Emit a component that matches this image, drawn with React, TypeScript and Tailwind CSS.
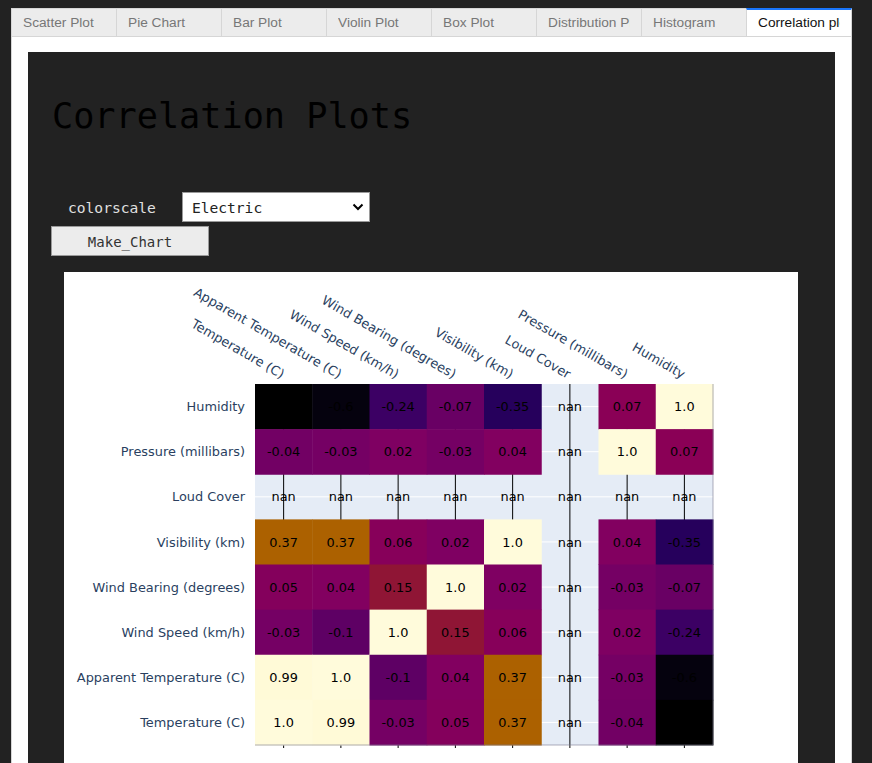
import React from "react";

const tabs = [
  "Scatter Plot",
  "Pie Chart",
  "Bar Plot",
  "Violin Plot",
  "Box Plot",
  "Distribution Plot",
  "Histogram",
  "Correlation plots",
];

const rows = [
  "Humidity",
  "Pressure (millibars)",
  "Loud Cover",
  "Visibility (km)",
  "Wind Bearing (degrees)",
  "Wind Speed (km/h)",
  "Apparent Temperature (C)",
  "Temperature (C)",
];

const cols = [
  "Temperature (C)",
  "Apparent Temperature (C)",
  "Wind Speed (km/h)",
  "Wind Bearing (degrees)",
  "Visibility (km)",
  "Loud Cover",
  "Pressure (millibars)",
  "Humidity",
];

const z: (string | null)[][] = [
  ["-0.63", "-0.6", "-0.24", "-0.07", "-0.35", null, "0.07", "1.0"],
  ["-0.04", "-0.03", "0.02", "-0.03", "0.04", null, "1.0", "0.07"],
  [null, null, null, null, null, null, null, null],
  ["0.37", "0.37", "0.06", "0.02", "1.0", null, "0.04", "-0.35"],
  ["0.05", "0.04", "0.15", "1.0", "0.02", null, "-0.03", "-0.07"],
  ["-0.03", "-0.1", "1.0", "0.15", "0.06", null, "0.02", "-0.24"],
  ["0.99", "1.0", "-0.1", "0.04", "0.37", null, "-0.03", "-0.6"],
  ["1.0", "0.99", "-0.03", "0.05", "0.37", null, "-0.04", "-0.63"],
];

const colorOf: Record<string, string> = {
  "-0.63": "#000000",
  "-0.6": "#05020e",
  "-0.35": "#26005c",
  "-0.24": "#3c0064",
  "-0.1": "#5e0064",
  "-0.07": "#690064",
  "-0.04": "#720064",
  "-0.03": "#750064",
  "0.02": "#7f0062",
  "0.04": "#820060",
  "0.05": "#84005c",
  "0.06": "#87005a",
  "0.07": "#8a0056",
  "0.15": "#8f1535",
  "0.37": "#ac6100",
  "0.99": "#fffad7",
  "1.0": "#fffbdb",
};

const X0 = 191;
const Y0 = 112;
const CW = 57.25;
const RH = 45.125;
const X1 = X0 + CW * 8;
const Y1 = Y0 + RH * 8;
const FONT = "'DejaVu Sans', Verdana, sans-serif";
const FS = 12.9;

function Heatmap() {
  return (
    <svg width={734} height={520} className="block">
      <rect x={X0} y={Y0} width={X1 - X0} height={Y1 - Y0} fill="#e5ecf6" />
      {rows.map((_, r) => (
        <line
          key={"h" + r}
          x1={X0}
          x2={X1}
          y1={Y0 + RH * r + RH / 2}
          y2={Y0 + RH * r + RH / 2}
          stroke="#ffffff"
          strokeWidth={1}
        />
      ))}
      {cols.map((_, c) => (
        <line
          key={"v" + c}
          x1={X0 + CW * c + CW / 2}
          x2={X0 + CW * c + CW / 2}
          y1={Y0}
          y2={Y1 + 3}
          stroke="#000000"
          strokeWidth={1}
        />
      ))}
      {z.map((row, r) =>
        row.map((v, c) =>
          v === null ? null : (
            <rect
              key={"c" + r + "-" + c}
              x={X0 + CW * c}
              y={Y0 + RH * r}
              width={CW + 0.5}
              height={RH + 0.5}
              fill={colorOf[v]}
            />
          )
        )
      )}
      <line x1={X1} x2={X1} y1={Y0} y2={Y1} stroke="#7a7a90" strokeWidth={1} opacity={0.6} />
      <line x1={X0} x2={X1} y1={Y1} y2={Y1} stroke="#7a7a90" strokeWidth={1} opacity={0.6} />
      {z.map((row, r) =>
        row.map((v, c) => (
          <text
            key={"t" + r + "-" + c}
            x={X0 + CW * c + CW / 2}
            y={Y0 + RH * r + RH / 2}
            dy="0.36em"
            textAnchor="middle"
            fontFamily={FONT}
            fontSize={FS}
            fill="#000000"
          >
            {v === null ? "nan" : v}
          </text>
        ))
      )}
      {rows.map((name, r) => (
        <text
          key={"rl" + r}
          x={X0 - 10}
          y={Y0 + RH * r + RH / 2}
          dy="0.36em"
          textAnchor="end"
          fontFamily={FONT}
          fontSize={FS}
          fill="#2a3f5f"
        >
          {name}
        </text>
      ))}
      {cols.map((name, c) => {
        const ax = X0 + CW * c + CW / 2 - 2.5;
        const ay = Y0 - 5;
        return (
          <text
            key={"cl" + c}
            x={ax}
            y={ay}
            textAnchor="end"
            transform={`rotate(30 ${ax} ${ay})`}
            fontFamily={FONT}
            fontSize={FS}
            fill="#2a3f5f"
          >
            {name}
          </text>
        );
      })}
    </svg>
  );
}

export default function App() {
  return (
    <div className="h-[763px] w-[872px] overflow-hidden bg-[#222222] pt-[8px] pl-[11px]">
      <div className="w-[841px]">
        <div className="flex h-[29px]">
          {tabs.map((t, i) => {
            const active = i === tabs.length - 1;
            return (
              <div
                key={t}
                className={
                  active
                    ? "flex h-[29px] w-[106px] items-center border-x border-b border-t-2 border-x-[#d6d6d6] border-b-[#d6d6d6] border-t-[#1975fa] bg-white px-[11px] text-[#111111]"
                    : "flex h-[29px] w-[105px] items-center border-l border-y border-[#d6d6d6] bg-[#ececec] px-[11px] text-[#777777]"
                }
                style={{ fontFamily: "'Liberation Sans', Arial, sans-serif" }}
              >
                <span className="block w-full overflow-hidden whitespace-nowrap text-[13.7px] leading-none">
                  {t}
                </span>
              </div>
            );
          })}
        </div>
        <div className="h-[740px] border-x border-[#d6d6d6] bg-white px-[16px] pt-[15px]">
          <div
            className="h-[720px] bg-[#222222] pl-[23px] pt-[46px]"
            style={{ fontFamily: "'DejaVu Sans Mono', monospace" }}
          >
            <div className="h-[35px] pl-[1px] text-[35.2px] leading-none text-black">Correlation Plots</div>
            <div className="mt-[59px] flex h-[30px] items-center">
              <span className="ml-[17px] mt-[2px] text-[14.6px] text-[#e0e0e0]">colorscale</span>
              <div className="ml-[26px] flex h-[30px] w-[188px] items-center justify-between border border-[#9a9a9a] bg-white pl-[9px] pr-[5px] text-[14.6px] text-[#222222]">
                <span className="mt-[2px]">Electric</span>
                <svg width="12" height="8" viewBox="0 0 12 8">
                  <path d="M1.5 1.5 L6 6 L10.5 1.5" fill="none" stroke="#000" strokeWidth="2" />
                </svg>
              </div>
            </div>
            <div className="mt-[4px] flex h-[30px] w-[158px] items-center justify-center border border-[#9a9a9a] bg-[#ececec] pt-[2px] text-[14px] text-[#333333]">
              Make_Chart
            </div>
            <div className="ml-[13px] mt-[16px] h-[520px] w-[734px] bg-white">
              <Heatmap />
            </div>
          </div>
        </div>
      </div>
    </div>
  );
}
